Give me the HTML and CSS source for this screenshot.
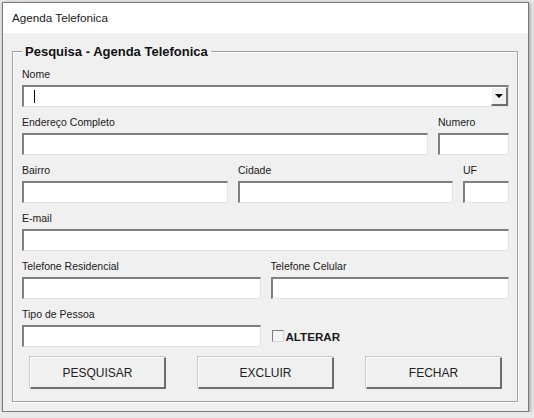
FILE: index.html
```html
<!DOCTYPE html>
<html lang="pt">
<head>
  <meta charset="UTF-8" />
  <title>Agenda Telefonica</title>
  <link rel="stylesheet" href="styles.css">
</head>
<body>
  <div class="janela">
    <div class="titulo">Agenda Telefonica</div>

    <div class="corpo">
      <fieldset class="grupo">
        <legend>Pesquisa - Agenda Telefonica</legend>

        <div class="linha">
          <div class="campo">
            <label for="nome">Nome</label>
            <div class="caixa combo">
              <span class="cursor"></span>
              <span class="seta"></span>
            </div>
          </div>
        </div>

        <div class="linha l-endereco">
          <div class="campo">
            <label>Endereço Completo</label>
            <div class="caixa"></div>
          </div>
          <div class="campo">
            <label>Numero</label>
            <div class="caixa"></div>
          </div>
        </div>

        <div class="linha l-bairro">
          <div class="campo">
            <label>Bairro</label>
            <div class="caixa"></div>
          </div>
          <div class="campo">
            <label>Cidade</label>
            <div class="caixa"></div>
          </div>
          <div class="campo">
            <label>UF</label>
            <div class="caixa"></div>
          </div>
        </div>

        <div class="linha">
          <div class="campo">
            <label>E-mail</label>
            <div class="caixa"></div>
          </div>
        </div>

        <div class="linha l-metade">
          <div class="campo">
            <label>Telefone Residencial</label>
            <div class="caixa"></div>
          </div>
          <div class="campo">
            <label>Telefone Celular</label>
            <div class="caixa"></div>
          </div>
        </div>

        <div class="linha l-metade">
          <div class="campo">
            <label>Tipo de Pessoa</label>
            <div class="caixa"></div>
          </div>
          <div class="marcar">
            <span class="quadro"></span>
            <span>ALTERAR</span>
          </div>
        </div>

        <div class="botoes">
          <button type="button">PESQUISAR</button>
          <button type="button">EXCLUIR</button>
          <button type="button">FECHAR</button>
        </div>
      </fieldset>
    </div>
  </div>
</body>
</html>
```

FILE: styles.css
```css
body {
  margin: 0;
  background-color: #e9e9e9;
  font-family: "Liberation Sans", Arial, sans-serif;
  color: #1a1a1a;
}

.janela {
  box-sizing: border-box;
  width: 527px;
  height: 410px;
  margin: 2px 0 0 2px;
  border: 1px solid #7a7a7a;
  background-color: #f0f0f0;
  box-shadow: 1px 1px 4px rgba(0,0,0,0.35);
}

.titulo {
  height: 30px;
  line-height: 30px;
  padding-left: 9px;
  background-color: #fff;
  font-size: 11.7px;
}

.corpo {
  padding: 11px 10px 0 9px;
}

/* Moldura do grupo */
.grupo {
  margin: 0;
  padding: 0 8px 12px 9px;
  border: 1px solid #a0a0a0;
  box-shadow: inset 1px 1px #fff, 1px 1px #fff;
}

.grupo legend {
  margin-left: 0;
  padding: 0 3px;
  font-size: 13px;
  font-weight: bold;
  color: #111;
}

.linha {
  display: grid;
  grid-template-columns: 1fr;
  column-gap: 10px;
  margin-top: 8px;
}

.linha:first-of-type {
  margin-top: 8px;
}

.l-endereco { grid-template-columns: 1fr 71px; }
.l-bairro { grid-template-columns: 206px 1fr 46px; }
.l-metade { grid-template-columns: 1fr 1fr; }

.campo label {
  display: block;
  height: 14px;
  line-height: 14px;
  margin-bottom: 4px;
  font-size: 10.5px;
}

.caixa {
  box-sizing: border-box;
  height: 22px;
  background-color: #fff;
  border-style: solid;
  border-width: 2px 1px 1px 2px;
  border-color: #7f7f7f #e3e3e3 #e3e3e3 #7f7f7f;
}

.combo {
  position: relative;
}

.cursor {
  position: absolute;
  left: 10px;
  top: 3px;
  width: 1px;
  height: 13px;
  background-color: #000;
}

.seta {
  position: absolute;
  right: 0;
  top: 0;
  box-sizing: border-box;
  width: 17px;
  height: 19px;
  background-color: #f0f0f0;
  border-style: solid;
  border-width: 1px 2px 2px 1px;
  border-color: #fff #6e6e6e #6e6e6e #fff;
}

.seta::after {
  content: "";
  position: absolute;
  left: 3px;
  top: 6px;
  border-left: 4px solid transparent;
  border-right: 4px solid transparent;
  border-top: 4px solid #000;
}

.marcar {
  display: flex;
  align-items: center;
  gap: 2px;
  align-self: end;
  height: 22px;
  padding-left: 1px;
  font-size: 11.6px;
  font-weight: bold;
}

.quadro {
  box-sizing: border-box;
  width: 12px;
  height: 12px;
  background-color: #f4f4f4;
  border: 1px solid #7f7f7f;
  border-right-color: #d8d8d8;
  border-bottom-color: #d8d8d8;
}

.botoes {
  display: flex;
  gap: 32px;
  margin: 10px 0 0 8px;
}

.botoes button {
  box-sizing: border-box;
  width: 136px;
  height: 32px;
  background-color: #f0f0f0;
  border-style: solid;
  border-width: 1px 2px 2px 1px;
  border-color: #fff #6e6e6e #6e6e6e #fff;
  box-shadow: -1px -1px 0 #c8c8c8;
  font-family: "Liberation Sans", Arial, sans-serif;
  font-size: 12px;
  color: #222;
}
```
